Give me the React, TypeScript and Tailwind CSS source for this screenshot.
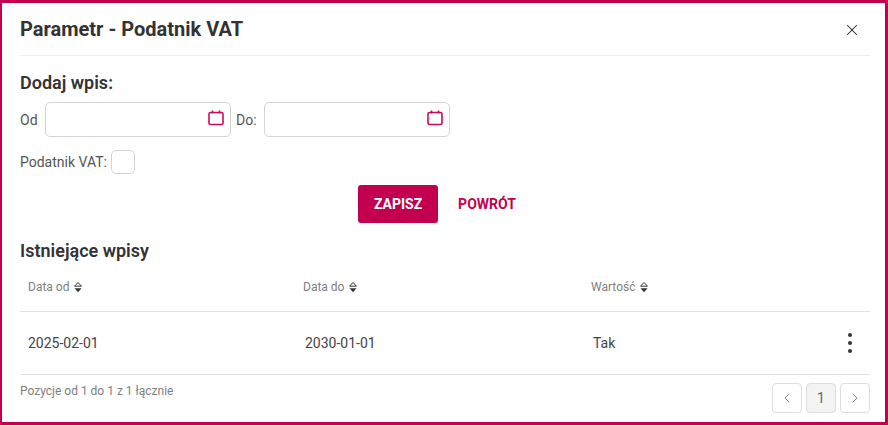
import { ChevronLeft, ChevronRight, X } from 'lucide-react';

const CalendarIcon = () => (
  <svg width="16" height="16" viewBox="0 0 16 16" fill="none" className="mb-[4px] text-[#cc0a5c]">
    <rect x="1" y="2.5" width="14" height="12" rx="1.5" stroke="currentColor" strokeWidth="1.6" />
    <path d="M4.5 0.5V3.5M11.5 0.5V3.5" stroke="currentColor" strokeWidth="1.6" />
  </svg>
);

const SortIcon = () => (
  <svg width="8" height="11" viewBox="0 0 8 11" className="text-[#333333]">
    <path d="M4 0.5L7.5 4.2H0.5Z" fill="none" stroke="currentColor" strokeWidth="1" />
    <path d="M0.5 6.3H7.5L4 10.3Z" fill="currentColor" />
  </svg>
);

const DateInput = ({ width }: { width: string }) => (
  <div className={`flex h-[35px] items-center justify-end rounded-[5px] border border-[#d4d4d4] bg-white pr-[6px] ${width}`}>
    <CalendarIcon />
  </div>
);

const columns = [
  { label: 'Data od', value: '2025-02-01', width: 'w-[275px]', cell: 'w-[277px]' },
  { label: 'Data do', value: '2030-01-01', width: 'w-[288px]', cell: 'w-[288px]' },
];

export default function App() {
  return (
    <div className="box-border flex h-[425px] w-[888px] flex-col border-[3px] border-l-2 border-[#c2004f] bg-white font-['Roboto',sans-serif] text-[#333333] antialiased">
      <div className="ml-[18px] mr-[15px] flex h-[53px] shrink-0 items-center justify-between border-b border-[#eeeeee]">
        <h1 className="text-[20px] leading-none font-bold text-[#333333]">Parametr - Podatnik VAT</h1>
        <X size={18} strokeWidth={1.4} className="mr-[9px] mt-[1px] text-[#222222]" />
      </div>

      <div className="flex flex-col pl-[18px] pr-[15px]">
        <h2 className="mt-[15px] text-[18px] leading-[24px] font-semibold">Dodaj wpis:</h2>

        <div className="mt-[7px] flex items-center text-[14px] text-[#555555]">
          <span className="w-[25px] pt-[1px]">Od</span>
          <DateInput width="w-[186px]" />
          <span className="w-[33px] pl-[5px] pt-[1px]">Do:</span>
          <DateInput width="w-[186px]" />
        </div>

        <div className="mt-[13px] flex items-center text-[14px] text-[#555555]">
          <span className="w-[91px]">Podatnik VAT:</span>
          <div className="h-[24px] w-[24px] rounded-[5px] border border-[#d4d4d4]" />
        </div>

        <div className="mt-[11px] flex items-center justify-center pr-[16px]">
          <button className="h-[38px] w-[80px] rounded-[3px] bg-[#c2004f] text-[14px] font-bold text-white">ZAPISZ</button>
          <button className="ml-[20px] text-[14px] font-bold text-[#c2004f]">POWRÓT</button>
        </div>

        <h2 className="mt-[16px] text-[18px] leading-[24px] font-semibold">Istniejące wpisy</h2>

        <div className="mt-[10px] flex h-[39px] items-start border-b border-[#e2e2e2] pt-[6px] pl-[8px] text-[12px] leading-[16px] text-[#808080]">
          {columns.map((col) => (
            <div key={col.label} className={`flex items-center gap-[5px] ${col.width}`}>
              {col.label}
              <SortIcon />
            </div>
          ))}
          <div className="flex items-center gap-[5px]">
            Wartość
            <SortIcon />
          </div>
        </div>

        <div className="flex h-[63px] items-center border-b border-[#e2e2e2] pl-[8px] text-[14px] text-[#444444]">
          {columns.map((col) => (
            <div key={col.label} className={col.cell}>
              {col.value}
            </div>
          ))}
          <div className="flex-1">Tak</div>
          <svg width="6" height="22" viewBox="0 0 6 22" className="mr-[17px] text-[#333333]">
            <circle cx="3" cy="3" r="2" fill="currentColor" />
            <circle cx="3" cy="11" r="2" fill="currentColor" />
            <circle cx="3" cy="19" r="2" fill="currentColor" />
          </svg>
        </div>

        <div className="mt-[8px] flex items-start justify-between">
          <span className="text-[12px] leading-[16px] text-[#808080]">Pozycje od 1 do 1 z 1 łącznie</span>
          <div className="flex gap-[4px]">
            <div className="flex h-[30px] w-[30px] items-center justify-center rounded-[4px] border border-[#dddddd] text-[#666666]">
              <ChevronLeft size={16} strokeWidth={1.1} />
            </div>
            <div className="flex h-[30px] w-[30px] items-center justify-center rounded-[4px] border border-[#dddddd] bg-[#f3f3f3] text-[14px] text-[#666666]">1</div>
            <div className="flex h-[30px] w-[30px] items-center justify-center rounded-[4px] border border-[#dddddd] text-[#666666]">
              <ChevronRight size={16} strokeWidth={1.1} />
            </div>
          </div>
        </div>
      </div>
    </div>
  );
}
